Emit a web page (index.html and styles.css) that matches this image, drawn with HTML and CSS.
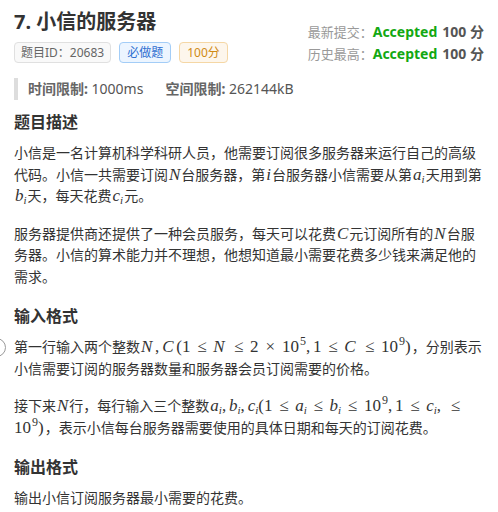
FILE: index.html
```html
<!DOCTYPE html>
<html lang="zh-CN">
<head>
    <meta charset="UTF-8">
    <meta name="viewport" content="width=device-width, initial-scale=1.0">
    <title>7. 小信的服务器</title>
    <link rel="stylesheet" href="styles.css">
</head>
<body>
    <span class="side-dot"></span>
    <div class="page">
        <div class="header">
            <div class="header-main">
                <h1 class="title">7. 小信的服务器</h1>
                <div class="tags">
                    <span class="tag tag-id">题目ID：20683</span>
                    <span class="tag tag-must">必做题</span>
                    <span class="tag tag-score">100分</span>
                </div>
            </div>
            <div class="status">
                <div class="status-row">
                    <span class="status-label">最新提交：</span>
                    <span class="accepted">Accepted</span>
                    <span class="score">100 分</span>
                </div>
                <div class="status-row">
                    <span class="status-label">历史最高：</span>
                    <span class="accepted">Accepted</span>
                    <span class="score">100 分</span>
                </div>
            </div>
        </div>

        <div class="limits">
            <span><b>时间限制:</b> 1000ms</span>
            <span><b>空间限制:</b> 262144kB</span>
        </div>

        <div class="content">
            <h2>题目描述</h2>
            <p>小信是一名计算机科学科研人员，他需要订阅很多服务器来运行自己的高级代码。小信一共需要订阅<span class="math"><i>N</i></span>台服务器，第<span class="math"><i>i</i></span>台服务器小信需要从第<span class="math"><i>a</i><sub>i</sub></span>天用到第<span class="math"><i>b</i><sub>i</sub></span>天，每天花费<span class="math"><i>c</i><sub>i</sub></span>元。</p>
            <p>服务器提供商还提供了一种会员服务，每天可以花费<span class="math"><i>C</i></span>元订阅所有的<span class="math"><i>N</i></span>台服务器。小信的算术能力并不理想，他想知道最小需要花费多少钱来满足他的需求。</p>

            <h2>输入格式</h2>
            <p>第一行输入两个整数<span class="math display"><i>N</i><span class="punct">,</span><i>C</i>(1<span class="rel">≤</span><i>N</i><span class="rel">≤</span>2<span class="bin">×</span>10<sup>5</sup><span class="punct">,</span>1<span class="rel">≤</span><i>C</i><span class="rel">≤</span>10<sup>9</sup>)</span>，分别表示小信需要订阅的服务器数量和服务器会员订阅需要的价格。</p>
            <p>接下来<span class="math"><i>N</i></span>行，每行输入三个整数<span class="math"><i>a</i><sub>i</sub><span class="punct">,</span><i>b</i><sub>i</sub><span class="punct">,</span><i>c</i><sub>i</sub>(1<span class="rel">≤</span><i>a</i><sub>i</sub><span class="rel">≤</span><i>b</i><sub>i</sub><span class="rel">≤</span>10<sup>9</sup><span class="punct">,</span>1<span class="rel">≤</span><i>c</i><sub>i</sub><span class="punct">,</span><span class="rel">≤</span> 10<sup>9</sup>)</span>，表示小信每台服务器需要使用的具体日期和每天的订阅花费。</p>

            <h2>输出格式</h2>
            <p>输出小信订阅服务器最小需要的花费。</p>
        </div>
    </div>
</body>
</html>
```

FILE: styles.css
```css
body {
    margin: 0;
    background-color: #fff;
    color: #333;
    font-family: "Noto Sans", "Noto Sans CJK SC", sans-serif;
    font-size: 14px;
}
.page {
    padding: 8px 14px 20px;
}
.side-dot {
    position: absolute;
    left: -13px;
    top: 338px;
    width: 17px;
    height: 17px;
    border: 1.5px solid #9a9a9a;
    border-radius: 50%;
    background-color: #fff;
}
.header {
    display: flex;
    justify-content: space-between;
    align-items: flex-start;
}
.title {
    margin: 0;
    font-size: 20px;
    line-height: 28px;
    font-weight: bold;
    color: #333;
}
.tags {
    display: flex;
    gap: 8px;
    margin-top: 6px;
}
.tag {
    display: inline-block;
    height: 21px;
    line-height: 19px;
    padding: 0 6px;
    font-size: 12px;
    border: 1px solid #dcdfe6;
    border-radius: 4px;
    box-sizing: border-box;
}
.tag-id {
    background-color: #f9f9f9;
    border-color: #e0e0e0;
    color: #666;
}
.tag-must {
    background-color: #ecf5ff;
    border-color: #a3cdf7;
    color: #2f6fd0;
    padding: 0 7px;
}
.tag-score {
    background-color: #fdf6ec;
    border-color: #f5d7a5;
    color: #d08a14;
    padding: 0 7px;
}
.status {
    padding-top: 13px;
}
.status-row {
    display: flex;
    align-items: baseline;
    height: 22px;
    line-height: 22px;
    justify-content: flex-end;
}
.status-label {
    font-size: 13px;
    color: #999;
}
.accepted {
    font-weight: bold;
    color: #12a812;
    margin-right: 5px;
}
.score {
    font-weight: bold;
    color: #555;
}
.limits {
    margin-top: 13px;
    border-left: 4px solid #ddd;
    padding-left: 10px;
    line-height: 22px;
    color: #555;
    display: flex;
    gap: 22px;
}
.limits b {
    color: #666;
}
.content h2 {
    margin: 17px 0 8px;
    font-size: 16px;
    line-height: 24px;
    font-weight: bold;
    color: #333;
}
.content h2:first-child {
    margin-top: 10px;
}
.content p {
    margin: 0 0 16px;
    line-height: 21.5px;
}
.math {
    font-family: "Liberation Serif", "DejaVu Serif", serif;
    font-size: 17px;
    line-height: 0;
    padding: 0 1px;
}
.math i {
    font-style: italic;
}
.math sub, .math sup {
    font-size: 12px;
    line-height: 0;
    vertical-align: baseline;
    position: relative;
}
.math sub {
    font-size: 11px;
    font-style: italic;
    top: 3px;
}
.math sup {
    margin-left: 1px;
    top: -7px;
}
.math .rel, .math .bin {
    display: inline-block;
    width: 0.78em;
    text-align: center;
}
.math .rel {
    margin: 0 0.28em;
}
.math .bin {
    margin: 0 0.3em;
}
.math .punct {
    margin-right: 0.17em;
}
.math.display i {
    padding-right: 0.16em;
}
```
